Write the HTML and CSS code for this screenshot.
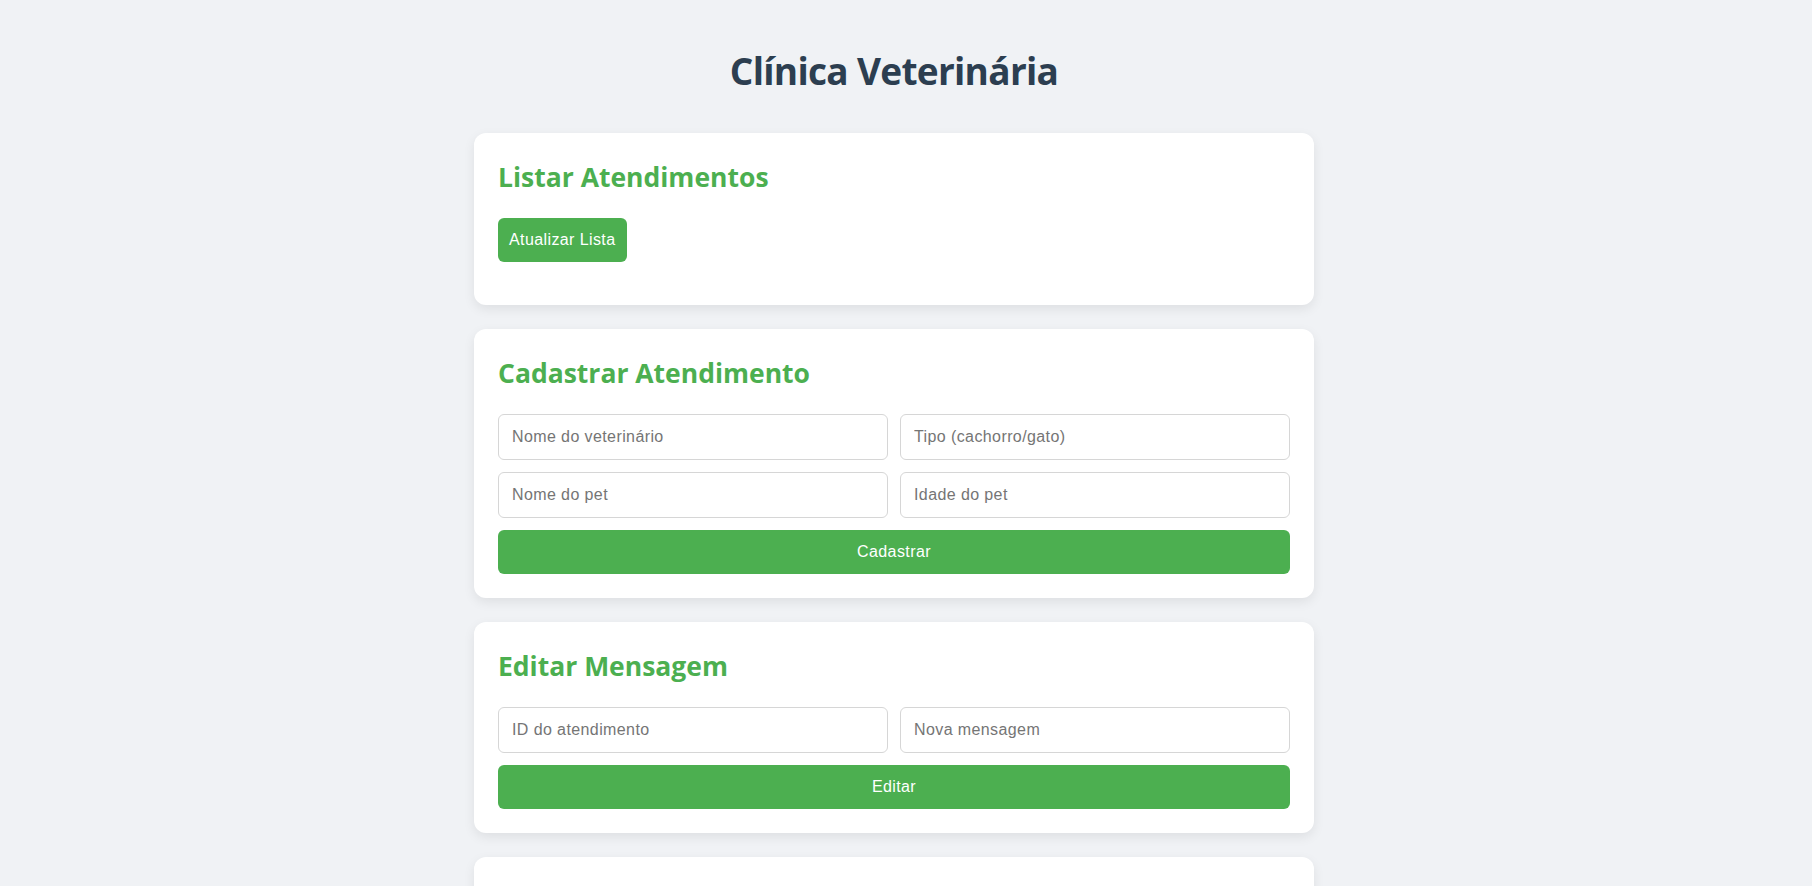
FILE: index.html
```html
<!DOCTYPE html>
<html lang="pt-BR">
<head>
<meta charset="UTF-8">
<title>Clínica Veterinária</title>
<link rel="stylesheet" href="styles.css">
</head>
<body>
<main class="page">
  <h1 class="page-title">Clínica Veterinária</h1>

  <section class="card">
    <h2 class="card-title">Listar Atendimentos</h2>
    <button class="btn">Atualizar Lista</button>
    <div class="list"></div>
  </section>

  <section class="card">
    <h2 class="card-title">Cadastrar Atendimento</h2>
    <div class="form-grid">
      <input class="field" type="text" placeholder="Nome do veterinário">
      <input class="field" type="text" placeholder="Tipo (cachorro/gato)">
      <input class="field" type="text" placeholder="Nome do pet">
      <input class="field" type="text" placeholder="Idade do pet">
      <button class="btn btn-full">Cadastrar</button>
    </div>
  </section>

  <section class="card">
    <h2 class="card-title">Editar Mensagem</h2>
    <div class="form-grid">
      <input class="field" type="text" placeholder="ID do atendimento">
      <input class="field" type="text" placeholder="Nova mensagem">
      <button class="btn btn-full">Editar</button>
    </div>
  </section>

  <section class="card">
    <h2 class="card-title">Excluir Atendimento</h2>
    <div class="form-grid">
      <input class="field" type="text" placeholder="ID do atendimento">
      <button class="btn btn-full">Excluir</button>
    </div>
  </section>
</main>
</body>
</html>
```

FILE: styles.css
```css
* { box-sizing: border-box; }

html, body {
  margin: 0;
  padding: 0;
  background: #f0f2f5;
}

body {
  padding-right: 24px;
  font-family: "Liberation Sans", Arial, sans-serif;
  color: #333;
}

.page {
  width: 840px;
  margin: 0 auto;
  padding: 47px 0 40px;
  display: flex;
  flex-direction: column;
  gap: 24px;
}

.page-title {
  margin: 0 0 14px;
  text-align: center;
  font-family: "Open Sans", "Noto Sans", sans-serif;
  font-weight: 700;
  font-size: 37px;
  letter-spacing: -0.7px;
  line-height: 48px;
  color: #2c3e50;
}

.card {
  background: #fff;
  border-radius: 12px;
  padding: 24px;
  box-shadow: 0 4px 12px rgba(0, 0, 0, 0.08);
}

.card-title {
  margin: 0 0 22px;
  padding-top: 1px;
  font-family: "Open Sans", "Noto Sans", sans-serif;
  font-weight: 700;
  font-size: 26.5px;
  line-height: 38px;
  color: #4caf50;
}

.btn {
  height: 44px;
  padding: 0 11px;
  border: none;
  border-radius: 6px;
  background: #4caf50;
  color: #fff;
  font-family: "Liberation Sans", Arial, sans-serif;
  font-size: 16px;
  letter-spacing: 0.4px;
  cursor: pointer;
}

.list {
  height: 19px;
}

.form-grid {
  display: grid;
  grid-template-columns: 1fr 1fr;
  gap: 12px;
  margin-top: 1px;
}

.btn-full {
  grid-column: 1 / -1;
  width: 100%;
}

.field {
  height: 46px;
  padding: 0 13px;
  border: 1px solid #d6d6d6;
  border-radius: 6px;
  background: #fff;
  font-family: "Liberation Sans", Arial, sans-serif;
  font-size: 16px;
  letter-spacing: 0.4px;
  color: #333;
}

.field::placeholder {
  color: #757575;
}
```
